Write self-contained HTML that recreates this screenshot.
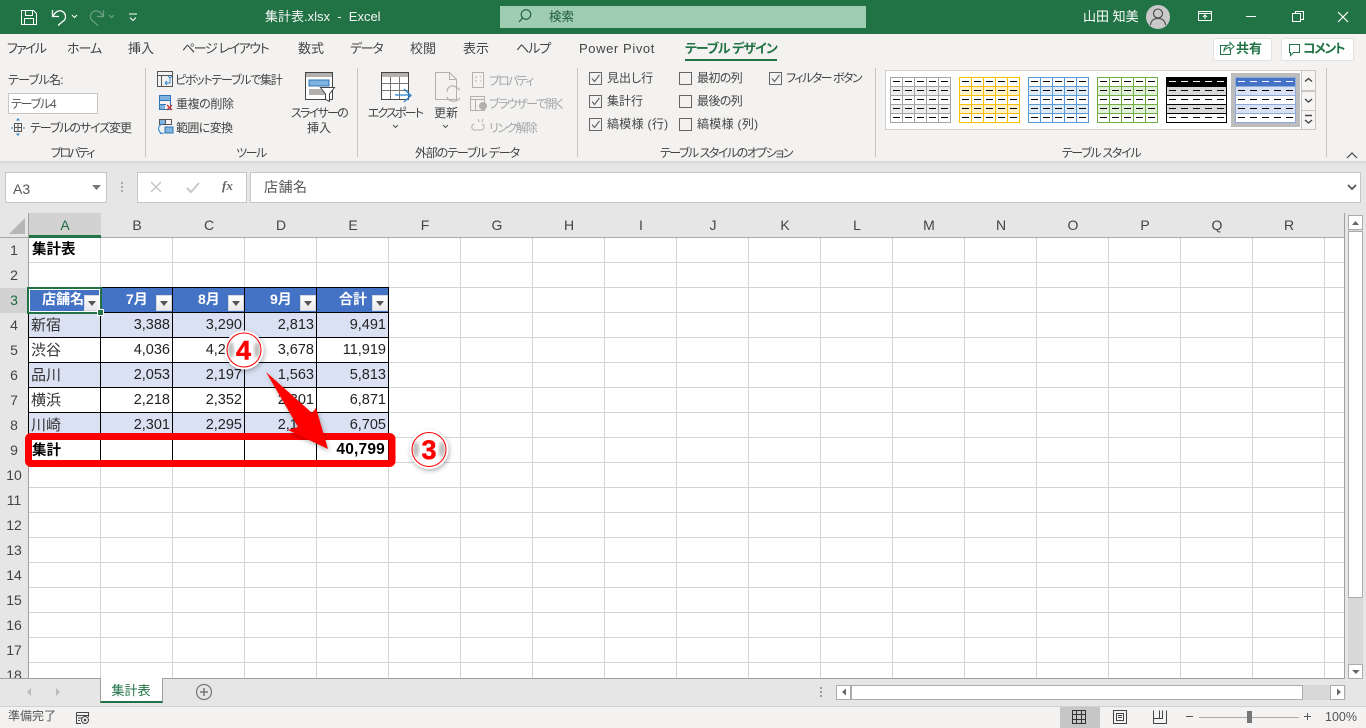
<!DOCTYPE html>
<html lang="ja"><head><meta charset="utf-8"><title>集計表.xlsx - Excel</title>
<style>
html,body{margin:0;padding:0;width:1366px;height:728px;overflow:hidden;background:#f3f2f1}
body{position:relative;font-family:"Liberation Sans","Noto Sans CJK JP",sans-serif;font-feature-settings:"palt";color:#444}
.b{position:absolute;box-sizing:border-box}
.t{position:absolute;white-space:nowrap;line-height:20px;height:20px;font-size:12px}
.c{transform:translateX(-50%)}
.g{color:#a6a6a6}
.w{color:#fff}
.h{position:absolute;top:213px;height:24px;line-height:25px;font-size:14px;color:#444;width:72px;text-align:center}
.n{position:absolute;left:0;width:28px;height:24px;line-height:25px;font-size:14px;color:#444;text-align:center}
.r{position:absolute;left:29px;width:360px;height:24px;line-height:25px;display:flex;font-size:14.5px;color:#222}
.r span{display:block;width:72px;box-sizing:border-box;text-align:right;padding-right:3px;white-space:nowrap}
.r span:first-child{text-align:left;padding:0 0 0 2px;font-size:15px;color:#333;font-feature-settings:normal}
.f{position:absolute;top:295px;width:16px;height:16px;background:linear-gradient(#fff,#e9e9ee);border:1px solid #d8d8e0;box-sizing:border-box}
.f:after{content:"";position:absolute;left:3px;top:5px;border:4px solid transparent;border-top:5px solid #555;border-bottom:0}
.th{position:absolute;top:287px;height:25px;line-height:25px;color:#fff;font-weight:bold;font-size:14px;white-space:nowrap}
</style></head><body>

<!-- title bar -->
<div class="b" style="left:0;top:0;width:1366px;height:34px;background:#217346"></div>
<div class="b" style="left:500px;top:6px;width:366px;height:22px;background:#9fcdb3"></div>
<div class="t w" style="left:265px;top:7px;font-size:13px;color:#f4f4f4">集計表.xlsx&nbsp; - &nbsp;Excel</div>
<div class="t" style="left:549px;top:7px;color:#1d5c3a;font-size:12.5px">検索</div>
<div class="t w" style="left:1083px;top:7px;font-size:13px">山田 知美</div>

<!-- ribbon tabs -->
<div class="t" style="left:7px;top:39px;font-size:13px;letter-spacing:-1.7px">ファイル</div>
<div class="t" style="left:67px;top:39px;font-size:13px;letter-spacing:-1px">ホーム</div>
<div class="t" style="left:128px;top:39px;font-size:13px">挿入</div>
<div class="t" style="left:182px;top:39px;font-size:13px;letter-spacing:-1.4px">ページ レイアウト</div>
<div class="t" style="left:298px;top:39px;font-size:13px">数式</div>
<div class="t" style="left:350px;top:39px;font-size:13px;letter-spacing:-1.3px">データ</div>
<div class="t" style="left:410px;top:39px;font-size:13px">校閲</div>
<div class="t" style="left:463px;top:39px;font-size:13px">表示</div>
<div class="t" style="left:516px;top:39px;font-size:13px;letter-spacing:-1px">ヘルプ</div>
<div class="t" style="left:579px;top:39px;font-size:13px;letter-spacing:.6px">Power Pivot</div>
<div class="t" style="left:685px;top:39px;font-size:13px;font-weight:bold;color:#217346;letter-spacing:-1px">テーブル デザイン</div>
<div class="b" style="left:685px;top:59px;width:92px;height:2px;background:#217346"></div>

<div class="b" style="left:1213px;top:38px;width:59px;height:23px;background:#fff;border:1px solid #e4e2e0;border-radius:2px"></div>
<div class="b" style="left:1281px;top:38px;width:73px;height:23px;background:#fff;border:1px solid #e4e2e0;border-radius:2px"></div>
<div class="t" style="left:1236px;top:39px;font-size:13px;font-weight:bold;color:#217346">共有</div>
<div class="t" style="left:1303px;top:39px;font-size:13px;font-weight:bold;color:#217346;letter-spacing:-1.5px">コメント</div>

<!-- ribbon separators -->
<div class="b" style="left:145px;top:68px;width:1px;height:89px;background:#c8c6c4"></div>
<div class="b" style="left:357px;top:68px;width:1px;height:89px;background:#c8c6c4"></div>
<div class="b" style="left:577px;top:68px;width:1px;height:89px;background:#c8c6c4"></div>
<div class="b" style="left:875px;top:68px;width:1px;height:89px;background:#c8c6c4"></div>
<div class="b" style="left:1326px;top:68px;width:1px;height:89px;background:#c8c6c4"></div>

<!-- property group -->
<div class="t" style="left:8px;top:70px;letter-spacing:-.7px">テーブル名:</div>
<div class="b" style="left:8px;top:93px;width:90px;height:21px;background:#fff;border:1px solid #c8c6c4"></div>
<div class="t" style="left:11px;top:94px;color:#555;letter-spacing:-1.2px">テーブル4</div>
<div class="t" style="left:30px;top:118px;letter-spacing:-1.1px">テーブルのサイズ変更</div>
<div class="t c" style="left:72px;top:143px;letter-spacing:-2.2px">プロパティ</div>

<!-- tools -->
<div class="t" style="left:175px;top:70px;letter-spacing:-1.25px">ピボットテーブルで集計</div>
<div class="t" style="left:176px;top:94px;letter-spacing:-.4px">重複の削除</div>
<div class="t" style="left:176px;top:118px;letter-spacing:-.6px">範囲に変換</div>
<div class="t c" style="left:319px;top:103px;letter-spacing:-1.7px">スライサーの</div>
<div class="t c" style="left:319px;top:118px">挿入</div>
<div class="t c" style="left:251px;top:143px;letter-spacing:-1.5px">ツール</div>

<!-- external -->
<div class="t c" style="left:395px;top:103px;letter-spacing:-1.8px">エクスポート</div>
<div class="t c" style="left:446px;top:103px">更新</div>
<div class="t g" style="left:489px;top:71px;letter-spacing:-2px">プロパティ</div>
<div class="t g" style="left:489px;top:94px;letter-spacing:-1.5px">ブラウザーで開く</div>
<div class="t g" style="left:489px;top:118px;letter-spacing:-1.6px">リンク解除</div>
<div class="t c" style="left:467px;top:143px;letter-spacing:-1.1px">外部のテーブル データ</div>

<!-- options -->
<div class="t" style="left:607px;top:68px">見出し行</div>
<div class="t" style="left:607px;top:91px">集計行</div>
<div class="t" style="left:607px;top:114px;letter-spacing:.3px">縞模様 (行)</div>
<div class="t" style="left:697px;top:68px;letter-spacing:-.6px">最初の列</div>
<div class="t" style="left:697px;top:91px;letter-spacing:-.6px">最後の列</div>
<div class="t" style="left:697px;top:114px;letter-spacing:.3px">縞模様 (列)</div>
<div class="t" style="left:786px;top:68px;letter-spacing:-1.5px">フィルター ボタン</div>
<div class="t c" style="left:726px;top:143px;letter-spacing:-1.5px">テーブル スタイルのオプション</div>
<div class="t c" style="left:1101px;top:143px;letter-spacing:-1.3px">テーブル スタイル</div>

<!-- gallery -->
<div class="b" style="left:885px;top:70px;width:417px;height:60px;background:#fff;border:1px solid #d2d0ce"></div>
<div class="b" style="left:1231px;top:73px;width:69px;height:54px;background:#bdbdbd"></div>
<div class="b" style="left:1301px;top:70px;width:15px;height:21px;background:#f6f5f4;border:1px solid #c8c6c4"></div>
<div class="b" style="left:1301px;top:91px;width:15px;height:20px;background:#f6f5f4;border:1px solid #c8c6c4"></div>
<div class="b" style="left:1301px;top:110px;width:15px;height:20px;background:#f6f5f4;border:1px solid #c8c6c4"></div>

<!-- ribbon shadow & formula area -->
<div class="b" style="left:0;top:161px;width:1366px;height:52px;background:#e6e6e6"></div>
<div class="b" style="left:0;top:161px;width:1366px;height:4px;background:linear-gradient(#d6d5d4,#e6e6e6)"></div>
<div class="b" style="left:5px;top:172px;width:102px;height:31px;background:#fff;border:1px solid #c8c6c4"></div>
<div class="b" style="left:137px;top:172px;width:110px;height:31px;background:#fff;border:1px solid #c8c6c4"></div>
<div class="b" style="left:250px;top:172px;width:1111px;height:31px;background:#fff;border:1px solid #c8c6c4"></div>
<div class="t" style="left:13px;top:179px;font-size:14px;color:#555">A3</div>
<div class="t" style="left:264px;top:177px;font-size:14px;color:#555;letter-spacing:.5px">店舗名</div>
<div class="t" style="left:222px;top:176px;font-size:13px;font-family:'Liberation Serif',serif;font-style:italic;font-weight:bold;color:#666">fx</div>

<!-- headers -->
<div class="b" style="left:0;top:213px;width:1345px;height:24px;background:#e6e6e6"></div>
<div class="b" style="left:0;top:237px;width:28px;height:442px;background:#e6e6e6"></div>
<div class="b" style="left:29px;top:213px;width:72px;height:24px;background:#d2d2d2"></div>
<div class="b" style="left:0;top:288px;width:28px;height:25px;background:#d2d2d2"></div>
<div class="b" style="left:29px;top:235px;width:72px;height:2px;background:#217346"></div>

<!-- sheet grid -->
<div class="b" style="left:29px;top:238px;width:1316px;height:441px;background-color:#fff;background-image:repeating-linear-gradient(90deg,transparent 0 71px,#d4d4d4 71px 72px),repeating-linear-gradient(180deg,transparent 0 24px,#d4d4d4 24px 25px)"></div>
<div class="b" style="left:28px;top:213px;width:1px;height:466px;background:#a0a0a0"></div>
<div class="b" style="left:0;top:237px;width:1345px;height:1px;background:#a8a8a8"></div>
<div class="b" style="left:29px;top:236px;width:72px;height:2px;background:#217346"></div>
<div class="b" style="left:1344px;top:213px;width:1px;height:466px;background:#a0a0a0"></div>
<div class="b" style="left:0;top:678px;width:1345px;height:1px;background:#a0a0a0"></div>

<div class="h" style="left:29px;color:#1f6b43">A</div><div class="h" style="left:101px">B</div><div class="h" style="left:173px">C</div><div class="h" style="left:245px">D</div><div class="h" style="left:317px">E</div><div class="h" style="left:389px">F</div><div class="h" style="left:461px">G</div><div class="h" style="left:533px">H</div><div class="h" style="left:605px">I</div><div class="h" style="left:677px">J</div><div class="h" style="left:749px">K</div><div class="h" style="left:821px">L</div><div class="h" style="left:893px">M</div><div class="h" style="left:965px">N</div><div class="h" style="left:1037px">O</div><div class="h" style="left:1109px">P</div><div class="h" style="left:1181px">Q</div><div class="h" style="left:1253px">R</div>

<div class="n" style="top:238px">1</div><div class="n" style="top:263px">2</div><div class="n" style="top:288px;color:#1f6b43">3</div><div class="n" style="top:313px">4</div><div class="n" style="top:338px">5</div><div class="n" style="top:363px">6</div><div class="n" style="top:388px">7</div><div class="n" style="top:413px">8</div><div class="n" style="top:438px">9</div><div class="n" style="top:463px">10</div><div class="n" style="top:488px">11</div><div class="n" style="top:513px">12</div><div class="n" style="top:538px">13</div><div class="n" style="top:563px">14</div><div class="n" style="top:588px">15</div><div class="n" style="top:613px">16</div><div class="n" style="top:638px">17</div><div class="b" style="left:0;top:663px;width:28px;height:15px;overflow:hidden"><div class="n" style="top:0">18</div></div>

<!-- cell content -->
<div class="t" style="left:32px;top:240px;font-size:14.5px;font-weight:bold;color:#000;font-feature-settings:normal">集計表</div>

<div class="b" style="left:29px;top:288px;width:360px;height:24px;background:#4472c4"></div>
<div class="b" style="left:29px;top:313px;width:360px;height:24px;background:#d9e1f2"></div>
<div class="b" style="left:29px;top:363px;width:360px;height:24px;background:#d9e1f2"></div>
<div class="b" style="left:29px;top:413px;width:360px;height:24px;background:#d9e1f2"></div>
<div class="b" style="left:29px;top:438px;width:360px;height:25px;background:#fff"></div>

<div class="b" style="left:28px;top:287px;width:361px;height:176px;background-image:repeating-linear-gradient(90deg,#000 0 1px,transparent 1px 72px),repeating-linear-gradient(180deg,#000 0 1px,transparent 1px 25px)"></div>

<div class="th" style="left:42px">店舗名</div>
<div class="th" style="left:126px">7月</div>
<div class="th" style="left:198px">8月</div>
<div class="th" style="left:270px">9月</div>
<div class="th" style="left:339px">合計</div>
<div class="f" style="left:84px"></div><div class="f" style="left:156px"></div><div class="f" style="left:228px"></div><div class="f" style="left:300px"></div><div class="f" style="left:372px"></div>

<div class="r" style="top:313px"><span>新宿</span><span>3,388</span><span>3,290</span><span>2,813</span><span>9,491</span></div>
<div class="r" style="top:338px"><span>渋谷</span><span>4,036</span><span>4,205</span><span>3,678</span><span>11,919</span></div>
<div class="r" style="top:363px"><span>品川</span><span>2,053</span><span>2,197</span><span>1,563</span><span>5,813</span></div>
<div class="r" style="top:388px"><span>横浜</span><span>2,218</span><span>2,352</span><span>2,301</span><span>6,871</span></div>
<div class="r" style="top:413px"><span>川崎</span><span>2,301</span><span>2,295</span><span>2,109</span><span>6,705</span></div>
<div class="t" style="left:32px;top:441px;font-size:14.5px;font-weight:bold;color:#000;font-feature-settings:normal">集計</div>
<div class="t" style="right:981px;top:440px;font-size:15.5px;font-weight:bold;color:#000;letter-spacing:.2px">40,799</div>

<!-- selection -->
<div class="b" style="left:27px;top:287px;width:75px;height:27px;border:2px solid #217346;box-shadow:inset 0 0 0 1px #fff"></div>
<div class="b" style="left:97px;top:309px;width:7px;height:7px;background:#217346;border:1px solid #fff"></div>

<!-- scrollbars -->
<div class="b" style="left:1345px;top:213px;width:21px;height:466px;background:#e6e6e6"></div>
<div class="b" style="left:1348px;top:215px;width:15px;height:464px;background:#d8d8d8"></div>
<div class="b" style="left:1348px;top:215px;width:15px;height:15px;background:#fff;border:1px solid #ababab"></div>
<div class="b" style="left:1348px;top:231px;width:15px;height:367px;background:#fff;border:1px solid #ababab"></div>
<div class="b" style="left:1348px;top:664px;width:15px;height:15px;background:#fff;border:1px solid #ababab"></div>

<div class="b" style="left:0;top:679px;width:1366px;height:27px;background:#e6e6e6"></div>
<div class="b" style="left:100px;top:678px;width:63px;height:25px;background:#fff;border-left:1px solid #a0a0a0;border-right:1px solid #a0a0a0;border-bottom:2px solid #217346"></div>
<div class="t c" style="left:131px;top:681px;color:#217346;font-size:13px">集計表</div>
<div class="b" style="left:836px;top:685px;width:510px;height:15px;background:#d8d8d8"></div>
<div class="b" style="left:836px;top:685px;width:15px;height:15px;background:#fff;border:1px solid #ababab"></div>
<div class="b" style="left:851px;top:685px;width:452px;height:15px;background:#fff;border:1px solid #ababab"></div>
<div class="b" style="left:1330px;top:685px;width:15px;height:15px;background:#fff;border:1px solid #ababab"></div>

<!-- status bar -->
<div class="b" style="left:0;top:706px;width:1366px;height:22px;background:#f3f2f1;border-top:1px solid #d0d0d0"></div>
<div class="b" style="left:1060px;top:707px;width:40px;height:21px;background:#c6c6c6"></div>
<div class="t" style="left:8px;top:706px;color:#555">準備完了</div>
<div class="t" style="left:1325px;top:707px;font-size:12.5px;color:#555">100%</div>

<!-- icons overlay -->
<svg class="b" style="left:0;top:0" width="1366" height="728" viewBox="0 0 1366 728" fill="none">
<defs>
<g id="gr" stroke="currentColor"><path d="M.5.5H60.5V45.5H.5ZM12.5.5V45.5M24.5.5V45.5M36.5.5V45.5M48.5.5V45.5M.5 9.5H60.5M.5 18.5H60.5M.5 27.5H60.5M.5 36.5H60.5"/></g>
<g id="hr" stroke="currentColor"><path d="M.5.5H60.5V45.5H.5ZM.5 9.5H60.5M.5 18.5H60.5M.5 27.5H60.5M.5 36.5H60.5"/></g>
<path id="da" stroke-dasharray="7 5" d="M3 4.5H60M3 13.5H60M3 22.5H60M3 31.5H60M3 40.5H60"/>
<path id="chk" stroke="#666" d="M.5.5h12v12H.5z"/>
<path id="tick" stroke="#666" stroke-width="1.2" d="M3 6.500l2.500 3 5-6.500"/>
<filter id="sh" x="-40%" y="-40%" width="180%" height="180%"><feDropShadow dx="1" dy="2" stdDeviation="2.500" flood-color="#000" flood-opacity=".3"/></filter>
<filter id="bl"><feGaussianBlur stdDeviation="1.500"/></filter>
</defs>

<!-- QAT -->
<g stroke="#fff" stroke-width="1">
<path d="M21.500 10.500H33.500L36.500 13.500V24.500H21.500ZM25.500 10.500V15.500H32.500V10.500M24.500 24.500V18.500H33.500V24.500"/>
<path stroke-width="1.300" d="M52.500 10V16.500H59M53 16.500C55 12 58.500 10 61.500 11C65.500 12.500 66.500 17 64.500 20L58 25.500"/>
<path d="M72 15l2.500 2.500L77 15"/>
<path d="M129 14H137M130 17.500l3 3 3-3"/>
</g>
<g stroke="#6f9f84" stroke-width="1.200"><path d="M103.500 10V16.500H97M103 16.500C101 12 97.500 10 94.500 11C90.500 12.500 89.500 17 91.500 20L98 25.500M109 15l2.500 2.500L114 15"/></g>

<!-- search -->
<circle cx="526" cy="14.500" r="4.800" stroke="#1d5c3a" stroke-width="1.100"/><path d="M522.500 18L519 22" stroke="#1d5c3a" stroke-width="1.200"/>

<!-- avatar + window -->
<circle cx="1158" cy="17" r="12" fill="#c9c9c9"/>
<circle cx="1158" cy="13.500" r="4.500" stroke="#444" stroke-width="1.100"/><path d="M1150.500 25C1151 20.500 1154 18.500 1158 18.500S1165 20.500 1165.500 25" stroke="#444" stroke-width="1.100"/>
<g stroke="#fff">
<path d="M1198.500 11.500H1211.500V20.500H1198.500ZM1198.500 13.500H1211.500M1205 19V15M1203 17l2-2 2 2"/>
<path d="M1246 16.500H1256"/>
<path d="M1292.500 13.500H1300.500V21.500H1292.500ZM1295.500 13.500V11.500H1303.500V19.500H1300.500"/>
<path d="M1338 12L1348 22M1348 12L1338 22" stroke-width="1.200"/>
</g>

<!-- share/comment -->
<g stroke="#217346"><path d="M1226.500 45.500H1220.500V54.500H1230.500V50M1224 51C1224 47 1227 45 1230 45V42.500L1234 46.500L1230 50V47.500C1228 47.500 1225.500 48.500 1224 51Z"/></g>
<path d="M1289.500 44.500H1299.500V52.500H1293.500L1290.500 55.500V52.500H1289.500Z" stroke="#217346"/>

<!-- property icon -->
<g stroke="#555"><path d="M14.500 123.500H21.500V131.500H14.500ZM14.500 127.500H21.500M18 123.500V131.500"/></g>
<g fill="#2e86d1"><path d="M18 118l2 2.500h-4zM18 136l2-2.500h-4zM11 127.500h2v1h-2zM23 127.500h2v1h-2z"/></g>

<!-- tools icons -->
<g stroke="#555"><path d="M157.500 71.500H172.500V86.500H157.500ZM157.500 75.500H172.500M161.500 75.500V86.500"/></g>
<path d="M165 83h5v-5M168 76l2 2 2-2M165 83l2-2M165 83l2 2" stroke="#2e86d1"/>
<path d="M159.500 95.500H170.500V109.500H159.500ZM159.500 100.500H170.500M159.500 104.500H166" stroke="#2e75b6"/>
<rect x="160" y="96" width="10" height="4" fill="#7fb3e0"/><rect x="160" y="105" width="5" height="4" fill="#7fb3e0"/>
<path d="M167 105l5 5M172 105l-5 5" stroke="#d13438" stroke-width="1.300"/>
<path d="M159.500 119.500H171.500V124.500H159.500ZM165.500 119.500V124.500" stroke="#555"/>
<rect x="160" y="120" width="5" height="4" fill="#7fb3e0"/>
<rect x="165" y="127" width="8" height="6" fill="#7fb3e0" stroke="#2e75b6"/>
<path d="M163 124C158 125 157 130 161 133M159 130l1.500 3.500L164 133" stroke="#2e86d1"/>

<!-- slicer -->
<path d="M305.500 72.500H332.500V99.500H305.500Z" fill="#fff" stroke="#444"/>
<rect x="306" y="73" width="26" height="4" fill="#b3b0ad"/>
<rect x="309" y="80" width="20" height="6" fill="#7fb3e0" stroke="#2e75b6"/>
<rect x="309" y="89" width="16" height="6" fill="#b3b0ad"/>
<path d="M320.500 87.500H334.500L329.500 94V101.500L325.500 99.500V94Z" fill="#fff" stroke="#444"/>

<!-- export -->
<path d="M381.500 72.500H408.500V99.500H381.500Z" fill="#fff" stroke="#444"/>
<rect x="382" y="73" width="26" height="4" fill="#b3b0ad"/>
<path d="M381.500 83.500H408.500M381.500 90.500H408.500M390.500 77V99M399.500 77V99" stroke="#777"/>
<path d="M395 95H410" stroke="#2e86d1" stroke-width="1.300"/><path d="M404 89L411 95.500L404 102" stroke="#2e86d1" stroke-width="1.300"/>
<path d="M393 125l2.500 2.500L398 125M443 125l2.500 2.500L448 125" stroke="#555"/>
<!-- refresh -->
<path d="M435.500 72.500H449.500L456.500 79.500V99.500H435.500ZM449.500 72.500V79.500H456.500" fill="#f3f2f1" stroke="#b3b0ad"/>
<path d="M447 92C447 87 452 84 456 87L460 90M447 97C449 102 456 103 460 98" stroke="#b3b0ad" stroke-width="1.200"/>
<path d="M472.500 72.500H483.500V87.500H472.500ZM475 77h2M480 77h1M475 81h2M480 81h1" stroke="#b3b0ad"/>
<path d="M470.500 96.500H484.500V110.500H470.500ZM470.500 99.500H484.500M475.500 99.500V110.500" stroke="#b3b0ad"/>
<circle cx="483" cy="106" r="4" fill="#b3b0ad"/>
<path d="M474 124c-3 1-3 5 0 6h7c4 0 4-5 1-6M478 119l1 3M483 119l-1 3" stroke="#b3b0ad"/>

<!-- checkboxes -->
<g transform="translate(589,72)"><use href="#chk"/><use href="#tick"/></g>
<g transform="translate(589,95)"><use href="#chk"/><use href="#tick"/></g>
<g transform="translate(589,118)"><use href="#chk"/><use href="#tick"/></g>
<g transform="translate(679,72)"><use href="#chk"/></g>
<g transform="translate(679,95)"><use href="#chk"/></g>
<g transform="translate(679,118)"><use href="#chk"/></g>
<g transform="translate(769,72)"><use href="#chk"/><use href="#tick"/></g>

<!-- gallery thumbs -->
<g transform="translate(890,77)" style="color:#a5a5a5"><rect width="61" height="46" fill="#fff"/><rect y="9" width="61" height="9" fill="#ededed"/><rect y="27" width="61" height="9" fill="#ededed"/><use href="#gr"/><use href="#da" stroke="#000"/></g>
<g transform="translate(959,77)" style="color:#ffc000"><rect width="61" height="46" fill="#fff"/><rect y="9" width="61" height="9" fill="#fff2cc"/><rect y="27" width="61" height="9" fill="#fff2cc"/><use href="#gr"/><use href="#da" stroke="#000"/></g>
<g transform="translate(1028,77)" style="color:#5b9bd5"><rect width="61" height="46" fill="#fff"/><rect y="9" width="61" height="9" fill="#deeaf6"/><rect y="27" width="61" height="9" fill="#deeaf6"/><use href="#gr"/><use href="#da" stroke="#000"/></g>
<g transform="translate(1097,77)" style="color:#70ad47"><rect width="61" height="46" fill="#fff"/><rect y="9" width="61" height="9" fill="#e2efd9"/><rect y="27" width="61" height="9" fill="#e2efd9"/><use href="#gr"/><use href="#da" stroke="#000"/></g>
<g transform="translate(1166,77)" style="color:#000"><rect width="61" height="46" fill="#fff"/><rect y="9" width="61" height="9" fill="#d9d9d9"/><rect y="27" width="61" height="9" fill="#d9d9d9"/><rect width="61" height="9" fill="#000"/><use href="#hr"/><use href="#da" stroke="#000"/><path d="M3 4.500H60" stroke="#fff" stroke-dasharray="7 5"/></g>
<g transform="translate(1235,77)" style="color:#8eaadb"><rect width="61" height="46" fill="#fff"/><rect y="9" width="61" height="9" fill="#d9e1f2"/><rect y="27" width="61" height="9" fill="#d9e1f2"/><rect width="61" height="9" fill="#4472c4"/><use href="#hr"/><use href="#da" stroke="#000"/><path d="M3 4.500H60" stroke="#fff" stroke-dasharray="7 5"/></g>
<g stroke="#444" stroke-width="1.400"><path d="M1305 81.500l3.500-3 3.500 3M1305 99l3.500 3 3.500-3M1305 115.500H1312M1305 120l3.500 3 3.500-3"/></g>
<path d="M1347 158l5-5 5 5" stroke="#444" stroke-width="1.200"/>

<!-- formula bar -->
<path d="M92 185H101L96.500 190Z" fill="#777"/>
<g fill="#aaa"><rect x="121" y="182" width="2" height="2"/><rect x="121" y="186" width="2" height="2"/><rect x="121" y="190" width="2" height="2"/></g>
<path d="M151 182l10 10M161 182l-10 10" stroke="#c8c8c8" stroke-width="1.500"/>
<path d="M187 188l4 4 8-9" stroke="#c8c8c8" stroke-width="2"/>
<path d="M1348 185l4 4 4-4" stroke="#555" stroke-width="1.800"/>
<!-- corner -->
<path d="M25 218V234H9Z" fill="#b6b6b6"/>

<!-- scroll arrows -->
<path d="M1352 225l3.500-4 3.500 4ZM1352 670h7.500l-3.500 4Z" fill="#666"/>
<path d="M1337 688.500v7l4-3.500Z" fill="#666"/>
<path d="M846 688.500v7l-4-3.500Z" fill="#666"/>
<path d="M31 688v8l-4-4ZM56 688v8l4-4Z" fill="#bbb"/>
<circle cx="204" cy="692" r="7.500" stroke="#777" stroke-width="1.200"/><path d="M200 692H208M204 688V696" stroke="#777" stroke-width="1.500"/>
<g fill="#999"><rect x="820" y="687" width="2" height="2"/><rect x="820" y="691" width="2" height="2"/><rect x="820" y="695" width="2" height="2"/></g>

<!-- status icons -->
<path d="M76.500 712.500H88.500V717M76.500 712.500V723.500H81M76.500 715.500H88.500M78 718h4M78 720.500h2" stroke="#444"/>
<circle cx="85" cy="720" r="3.500" stroke="#444"/><circle cx="85" cy="720" r="1.300" fill="#444"/>
<path d="M1072.500 710.500H1085.500V723.500H1072.500ZM1076.500 710.500V723.500M1081.500 710.500V723.500M1072.500 714.500H1085.500M1072.500 719.500H1085.500" stroke="#333"/>
<path d="M1113.500 710.500H1126.500V723.500H1113.500ZM1116.500 713.500H1123.500V720.500H1116.500ZM1118 715.500H1122M1118 717.500H1122" stroke="#444"/>
<path d="M1153.500 710.500V723.500H1166.500V710.500M1159.500 710.500V718.500H1162.500V710.500M1153.500 718.500H1159.500" stroke="#444"/>
<path d="M1186 716.500H1193M1304 716.500H1311M1307.500 713V720" stroke="#555"/>
<path d="M1199 717.500H1299" stroke="#aaa"/>
<rect x="1247" y="711" width="5" height="12" fill="#777"/>

<!-- annotations -->
<rect x="28.500" y="436.500" width="363.500" height="27" rx="2.500" stroke="#f00" stroke-width="7"/>
<path d="M266 372L312 413L316 408L328 449L288 430L298 427Z" fill="#f00" filter="url(#sh)"/>

<circle cx="244" cy="350" r="19.500" fill="#fff" filter="url(#sh)"/>
<ellipse cx="231" cy="350" rx="3" ry="8" fill="#bbb" filter="url(#bl)"/><ellipse cx="257" cy="350" rx="3" ry="8" fill="#bbb" filter="url(#bl)"/>
<circle cx="244" cy="350" r="17" stroke="#f00" stroke-width="1"/>
<text x="243.500" y="359.500" text-anchor="middle" font-family="Liberation Sans" font-weight="bold" font-size="27" fill="#f00" stroke="#f00" stroke-width=".5">4</text>

<circle cx="429" cy="449.500" r="19.500" fill="#fff" filter="url(#sh)"/>
<ellipse cx="416" cy="449.500" rx="3" ry="8" fill="#bbb" filter="url(#bl)"/><ellipse cx="442" cy="449.500" rx="3" ry="8" fill="#bbb" filter="url(#bl)"/>
<circle cx="429" cy="449.500" r="17" stroke="#f00" stroke-width="1"/>
<text x="429" y="459" text-anchor="middle" font-family="Liberation Sans" font-weight="bold" font-size="27" fill="#f00" stroke="#f00" stroke-width=".5">3</text>
</svg>
</body></html>
